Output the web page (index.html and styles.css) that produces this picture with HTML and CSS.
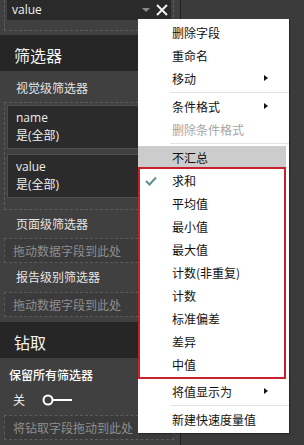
FILE: index.html
```html
<!DOCTYPE html>
<html>
<head>
<meta charset="utf-8">
<link rel="stylesheet" href="styles.css">
</head>
<body>
<div class="page">
  <div class="panel">
    <div class="well well-top">
      <div class="field">
        <span class="field-text">value</span>
        <span class="caret"></span>
        <svg class="close" width="14" height="14" viewBox="0 0 14 14"><path d="M2 2 L12 12 M12 2 L2 12" stroke="#f2f2f2" stroke-width="2" fill="none"/></svg>
      </div>
    </div>
    <div class="section-head">筛选器</div>
    <div class="label first">视觉级筛选器</div>
    <div class="well cards">
      <div class="card"><div class="line">name</div><div class="line">是(全部)</div></div>
      <div class="card"><div class="line">value</div><div class="line">是(全部)</div></div>
    </div>
    <div class="label">页面级筛选器</div>
    <div class="drop">拖动数据字段到此处</div>
    <div class="label tall">报告级别筛选器</div>
    <div class="drop">拖动数据字段到此处</div>
    <div class="section-head drill">钻取</div>
    <div class="keep">保留所有筛选器</div>
    <div class="toggle">
      <span>关</span>
      <svg width="34" height="12" viewBox="0 0 34 12"><circle cx="6" cy="6" r="4.5" stroke="#ffffff" stroke-width="2" fill="none"/><line x1="10.5" y1="6" x2="30" y2="6" stroke="#ffffff" stroke-width="2"/></svg>
    </div>
    <div class="drop last">将钻取字段拖动到此处</div>
  </div>
  <div class="rest"></div>

  <div class="menu">
    <div class="item">删除字段</div>
    <div class="item">重命名</div>
    <div class="item sub">移动</div>
    <div class="sep"></div>
    <div class="item sub">条件格式</div>
    <div class="item disabled">删除条件格式</div>
    <div class="sep"></div>
    <div class="item hover">不汇总</div>
    <div class="item checked">
      <svg class="check" width="12" height="10" viewBox="0 0 12 10"><path d="M1 5 L4.5 8.5 L11 1.5" stroke="#5e918f" stroke-width="2" fill="none"/></svg>求和</div>
    <div class="item">平均值</div>
    <div class="item">最小值</div>
    <div class="item">最大值</div>
    <div class="item">计数(非重复)</div>
    <div class="item">计数</div>
    <div class="item">标准偏差</div>
    <div class="item">差异</div>
    <div class="item">中值</div>
    <div class="gap"></div>
    <div class="item sub">将值显示为</div>
    <div class="sep"></div>
    <div class="item">新建快速度量值</div>
    <div class="redbox"></div>
  </div>
</div>
</body>
</html>
```

FILE: styles.css
```css
* { box-sizing: border-box; }
html, body { margin: 0; padding: 0; }
body {
  width: 304px;
  height: 445px;
  overflow: hidden;
  background: #3b3b3b;
  font-family: "Noto Sans CJK SC", "Noto Sans", sans-serif;
  font-size: 12px;
}
.page {
  position: relative;
  display: flex;
  width: 304px;
  height: 445px;
}
.panel {
  width: 181px;
  height: 445px;
  background: #404040;
  border-right: 1px solid #1e1e1e;
  color: #e8e8e8;
  flex: none;
}
.rest {
  flex: 1;
  background: #3b3b3b;
}
.well {
  margin: 0 0 0 4px;
  width: 170px;
  border: 1px dashed #5c5c5c;
}
.well-top {
  border-top: none;
  padding: 0 2px 10px 2px;
}
.field {
  height: 20px;
  background: #2a2a2a;
  display: flex;
  align-items: center;
  padding-left: 5px;
  position: relative;
}
.field-text {
  font-family: "Open Sans", "Noto Sans", sans-serif;
  font-size: 12px;
  color: #f0f0f0;
  line-height: 20px;
}
.caret {
  margin-left: auto;
  width: 0;
  height: 0;
  border-left: 4px solid transparent;
  border-right: 4px solid transparent;
  border-top: 4px solid #8a8a8a;
  margin-right: 5px;
}
.close {
  margin-right: 2px;
  display: block;
}
.section-head {
  margin-top: 4px;
  height: 36px;
  background: #262626;
  padding: 4px 0 0 14px;
  line-height: 32px;
  font-size: 16px;
  color: #f2f2f2;
}
.section-head.drill { margin-top: 5px; }
.label {
  height: 28px;
  line-height: 28px;
  padding-left: 16px;
  color: #e4e4e4;
}
.label.first { margin-top: 3px; }
.label.tall { height: 29px; }
.cards {
  padding: 2px 2px 11px 2px;
  display: flex;
  flex-direction: column;
  gap: 5px;
}
.card {
  height: 44px;
  background: #2b2b2b;
  border: 1px solid #4e4e4e;
  padding: 3px 0 0 8px;
  font-family: "Open Sans", "Noto Sans", "Noto Sans CJK SC", sans-serif;
}
.card .line {
  height: 18px;
  line-height: 18px;
  color: #ededed;
  font-family: "Open Sans", "Noto Sans CJK SC", sans-serif;
}
.drop {
  margin-left: 4px;
  width: 170px;
  height: 25px;
  border: 1px dashed #5c5c5c;
  background: #3b3b3b;
  color: #8e8e8e;
  line-height: 23px;
  padding-left: 8px;
}
.drop.last { margin-top: 8px; }
.keep {
  height: 34px;
  line-height: 34px;
  padding-left: 9px;
  color: #ffffff;
  font-weight: 500;
}
.toggle {
  height: 15px;
  display: flex;
  align-items: center;
  padding-left: 13px;
  color: #f0f0f0;
  gap: 0;
}
.toggle span { width: 29px; }
.toggle svg { display: block; }

.menu {
  position: absolute;
  left: 138px;
  top: 19px;
  width: 151px;
  height: 414px;
  background: #ffffff;
  box-shadow: 1px 1px 1px rgba(0,0,0,0.35);
  padding: 2px 3px 0 0;
  color: #111111;
}
.item {
  position: relative;
  height: 23px;
  line-height: 23px;
  padding-left: 34px;
}
.item.sub::after {
  content: "";
  position: absolute;
  left: 126px;
  top: 8px;
  width: 0;
  height: 0;
  border-top: 3.5px solid transparent;
  border-bottom: 3.5px solid transparent;
  border-left: 4px solid #111;
}
.item.disabled { color: #a6a6a6; }
.item.hover { background: #cccccc; }
.check {
  position: absolute;
  left: 7px;
  top: 7px;
}
.sep {
  height: 5px;
  margin-left: 32px;
  position: relative;
}
.sep::after {
  content: "";
  position: absolute;
  left: 0;
  right: -3px;
  top: 2px;
  height: 1px;
  background: #e3e3e3;
}
.gap { height: 4px; }
.redbox {
  position: absolute;
  left: 0;
  top: 148px;
  width: 148px;
  height: 212px;
  border: 2px solid #c8202d;
  pointer-events: none;
}
```
